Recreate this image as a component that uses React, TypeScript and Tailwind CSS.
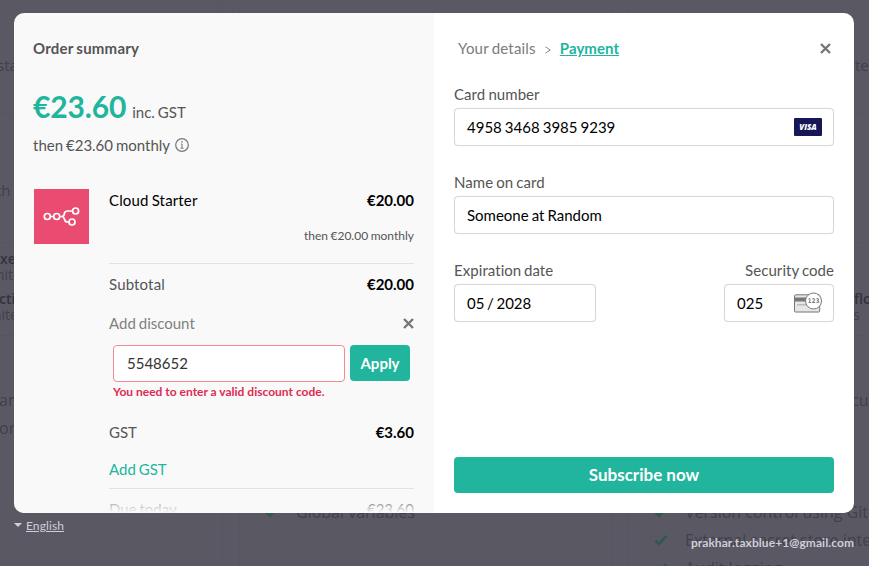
import React from "react";

const openSans = "font-['Open_Sans','Liberation_Sans',sans-serif]";
const lato = "font-['Lato','Liberation_Sans',sans-serif]";

function Check() {
  return (
    <svg width="14" height="14" viewBox="0 0 14 14" fill="none" stroke="#2f5850" strokeWidth="2.6">
      <path d="M1.500 7.500 5 11l7.500-8" />
    </svg>
  );
}

function Feature({ children }: { children: React.ReactNode }) {
  return (
    <li className="flex h-[28px] items-center">
      <Check />
      <span className="ml-[17px] whitespace-nowrap">{children}</span>
    </li>
  );
}

type Line = { text: string; pad: string };

function PlanCard({
  price,
  note,
  limits,
  support,
  features,
}: {
  price: Line;
  note: Line;
  limits: Line[];
  support: Line[];
  features: string[];
}) {
  return (
    <section className="h-[700px] w-[373px] shrink-0 rounded-[8px] border border-[#53546a]/80">
      <div className="h-[114px] border-b border-[#53546a]/80 pt-[53px]">
        <p className={`${price.pad} text-[15px] leading-6`}>{price.text}</p>
      </div>
      <div className="h-[129px] border-b border-[#53546a]/80 pt-[64px]">
        <p className={`${note.pad} text-[15px] leading-6`}>{note.text}</p>
      </div>
      <div className="h-[93px] border-b border-[#53546a]/80 pt-[5px]">
        {limits.map((line, i) => (
          <p
            key={i}
            className={`${line.pad} ${i % 2 === 0 ? "h-[18px] text-[14px] font-semibold leading-[22px] text-[#33323c]" : "h-[22px] text-[14px] leading-[18px]"}`}
          >
            {line.text}
          </p>
        ))}
      </div>
      <div className="h-[162px] pt-[50px] text-[16px]">
        {support.map((line, i) => (
          <p key={i} className={`${line.pad} h-[28px] leading-[28px]`}>
            {line.text}
          </p>
        ))}
      </div>
      <ul className="pl-[25px] text-[16px]">
        {features.map((f) => (
          <Feature key={f}>{f}</Feature>
        ))}
      </ul>
    </section>
  );
}

const none: Line = { text: "", pad: "" };

function CloseIcon({ color }: { color: string }) {
  return (
    <svg width="11" height="11" viewBox="0 0 11 11" fill="none" stroke={color} strokeWidth="2.4">
      <path d="M1 1l9 9M10 1l-9 9" />
    </svg>
  );
}

function InfoIcon() {
  return (
    <svg width="14" height="14" viewBox="0 0 14 14" fill="none" stroke="#777" strokeWidth="1.2">
      <circle cx="7" cy="7" r="6.300" />
      <path d="M6 6h1v4.200M5.500 10.200h3" strokeWidth="1" />
      <circle cx="7" cy="3.900" r=".8" fill="#777" stroke="none" />
    </svg>
  );
}

function Logo() {
  return (
    <div className="flex size-[55px] shrink-0 items-center justify-center bg-[#ea4b71]">
      <svg width="55" height="55" viewBox="0 0 55 55" fill="none" stroke="#fff" strokeWidth="1.7">
        <circle cx="13.300" cy="27.500" r="3" />
        <circle cx="22.700" cy="27.500" r="3" />
        <circle cx="41.600" cy="22" r="3" />
        <circle cx="38" cy="33" r="3" />
        <path d="M16.300 27.500h3.400M25.700 27.500h2c5 0 0-5.500 6-5.500h4.900M27.700 27.500c4 0 1.500 5.500 5.500 5.500h1.800" />
      </svg>
    </div>
  );
}

function VisaIcon() {
  return (
    <span className="flex h-[18px] w-[28px] items-center justify-center rounded-[1px] bg-[#171758] font-['Open_Sans',sans-serif] text-[8px] font-extrabold italic leading-none text-white">
      VISA
    </span>
  );
}

function CvcIcon() {
  return (
    <svg className="-mt-[2px]" width="28" height="21" viewBox="0 0 28 21" fill="none">
      <rect x=".5" y="2.800" width="25.200" height="17.200" rx="1" fill="#e6e6e6" stroke="#777" />
      <path d="M1 5.500h24v4H1z" fill="#777" />
      <path d="M3 12.700h10" stroke="#bbb" strokeWidth="1.400" />
      <circle cx="19.500" cy="9" r="8" fill="#fff" stroke="#777" />
      <text x="19.700" y="11.300" textAnchor="middle" fontSize="6.500" fontWeight="700" letterSpacing=".4" fill="#777" fontFamily="DejaVu Sans, sans-serif" textLength="12" lengthAdjust="spacingAndGlyphs">
        123
      </text>
    </svg>
  );
}

function Field({ label, value, width, right, icon }: { label: string; value: string; width: string; right?: boolean; icon?: React.ReactNode }) {
  return (
    <label className={`block ${width}`}>
      <span className={`block h-[25px] text-[15px] leading-[22px] tracking-[0.06px] text-[#555] ${right ? "text-right" : ""}`}>{label}</span>
      <span className="flex h-[38px] items-center justify-between rounded-[4px] border border-[#d8d8d8] bg-white pl-[12px] pr-[11px] text-[15px] text-black shadow-[0_0_1px_#ddd]">
        {value}
        {icon}
      </span>
    </label>
  );
}

function OrderSummary() {
  return (
    <div className="relative h-[500px] w-[420px] overflow-hidden bg-[#f9f9f9] pl-[19px] pr-[20px] text-[15px] text-[#555]">
      <h2 className="mt-[23px] h-[24px] font-bold leading-6 tracking-[0.23px]">Order summary</h2>
      <div className="mt-[26px] flex h-[40px] items-baseline gap-[6px]">
        <span className="text-[30px] font-bold leading-10 tracking-[-0.15px] text-[#21b59e]">€23.60</span>
        <span>inc. GST</span>
      </div>
      <div className="mt-[7px] flex h-[24px] items-center gap-[5px]">
        then €23.60 monthly <InfoIcon />
      </div>
      <div className="mt-[32px] flex gap-[20px] pl-px">
        <Logo />
        <div className="-mt-px w-[305px]">
          <div className="flex h-[24px] justify-between leading-6 text-black">
            <span className="tracking-[0.15px]">Cloud Starter</span>
            <span className="font-bold">€20.00</span>
          </div>
          <p className="mt-[14px] h-[20px] text-right text-[12px] leading-5 [word-spacing:-0.5px]">then €20.00 monthly</p>
          <div className="mt-[17px] border-t border-[#e2e2e2]" />
          <div className="mt-[8px] flex h-[24px] justify-between leading-6">
            <span className="tracking-[0.15px]">Subtotal</span>
            <span className="font-bold text-black">€20.00</span>
          </div>
          <div className="mt-[15px] flex h-[24px] items-center justify-between text-[#808080]">
            <span>Add discount</span>
            <CloseIcon color="#777" />
          </div>
          <div className="mt-[10px] flex gap-[5px] px-[4px]">
            <span className="flex h-[37px] w-[232px] items-center rounded-[4px] border border-[#f58a94] bg-white pl-[13px] text-[#333]">
              5548652
            </span>
            <button className="h-[36px] w-[60px] rounded-[4px] bg-[#21b59e] font-bold text-white">Apply</button>
          </div>
          <p className="h-[20px] pl-[4px] text-[12px] font-bold leading-5 text-[#dc2c51] [word-spacing:0px]">
            You need to enter a valid discount code.
          </p>
          <div className="mt-[18px] flex h-[24px] justify-between leading-6">
            <span>GST</span>
            <span className="font-bold text-black">€3.60</span>
          </div>
          <p className="mt-[13px] h-[24px] leading-6 text-[#21b59e]">Add GST</p>
          <div className="mt-[7px] border-t border-[#e2e2e2]" />
          <div className="mt-[8px] flex h-[24px] justify-between leading-6">
            <span>Due today</span>
            <span className="text-black">€23.60</span>
          </div>
        </div>
      </div>
      <div className="absolute inset-x-0 bottom-0 h-[14px] bg-gradient-to-b from-[#f9f9f9]/40 to-[#f9f9f9]" />
    </div>
  );
}

function Payment() {
  return (
    <div className="flex h-[500px] w-[420px] flex-col bg-white px-[20px] pb-[20px] pt-[23px] text-[15px]">
      <div className="flex h-[24px] items-center pl-[4px] pr-[3px] text-[#7b7b7b]">
        <span className="tracking-[0.2px]">Your details</span>
        <svg className="mx-[9px] mt-[4px]" width="6" height="8" viewBox="0 0 6 8" fill="none" stroke="#888">
          <path d="M.5.800 5.200 4 .5 7.200" />
        </svg>
        <span className="font-bold tracking-[0.06px] text-[#21b59e] underline">Payment</span>
        <span className="ml-auto">
          <CloseIcon color="#777" />
        </span>
      </div>
      <div className="mt-[23px] flex flex-col gap-[25px]">
        <Field label="Card number" value="4958 3468 3985 9239" width="w-[380px] [word-spacing:-0.8px]" icon={<VisaIcon />} />
        <Field label="Name on card" value="Someone at Random" width="w-[380px] [word-spacing:-0.8px]" />
        <div className="flex justify-between">
          <Field label="Expiration date" value="05 / 2028" width="w-[142px] [word-spacing:-1.2px]" />
          <Field label="Security code" value="025" width="w-[110px] [word-spacing:-0.9px]" right icon={<CvcIcon />} />
        </div>
      </div>
      <button className="mt-auto h-[36px] rounded-[4px] bg-[#21b59e] text-[17px] font-bold text-white [word-spacing:0px]">Subscribe now</button>
    </div>
  );
}

export default function App() {
  return (
    <main className={`relative h-[566px] w-[869px] overflow-hidden bg-[#5a5963] ${lato}`}>
      <div className={`-ml-[150px] -mt-px flex w-[1160px] gap-[16px] text-[#41404b] ${openSans}`}>
        <PlanCard
          price={{ text: "sta", pad: "pl-[146px]" }}
          note={{ text: "th", pad: "pl-[145px]" }}
          limits={[
            { text: "xe", pad: "pl-[149px]" },
            { text: "nite", pad: "pl-[145px]" },
            { text: "cti", pad: "pl-[148px]" },
            { text: "nite", pad: "pl-[142px]" },
          ]}
          support={[
            { text: "an", pad: "pl-[148px]" },
            { text: "or", pad: "pl-[148px]" },
          ]}
          features={[]}
        />
        <PlanCard price={none} note={none} limits={[]} support={[]} features={["Global variables"]} />
        <PlanCard
          price={{ text: "tes", pad: "pl-[226px]" }}
          note={none}
          limits={[none, none, { text: "flows", pad: "pl-[225px]" }, { text: "s", pad: "pl-[224px]" }]}
          support={[{ text: "cution", pad: "pl-[222px]" }]}
          features={["Version control using Git", "External secret store integration", "Audit logging"]}
        />
      </div>

      <div className="absolute left-[14px] top-[13px] flex h-[500px] w-[840px] overflow-hidden rounded-[10px] [word-spacing:-0.9px]">
        <OrderSummary />
        <Payment />
      </div>

      <div className="absolute left-[14px] right-[15px] top-[516px] flex items-start justify-between text-[12px] text-[#cfced8]">
        <span className="flex h-[20px] items-center gap-[4px]">
          <span className="mb-[3px] border-x-[4px] border-t-[4px] border-x-transparent border-t-[#cfced8]" />
          <span className="tracking-[0.1px] underline">English</span>
        </span>
        <span className="mt-[17px] font-bold leading-5 tracking-[0.07px]">prakhar.taxblue+1@gmail.com</span>
      </div>
    </main>
  );
}
